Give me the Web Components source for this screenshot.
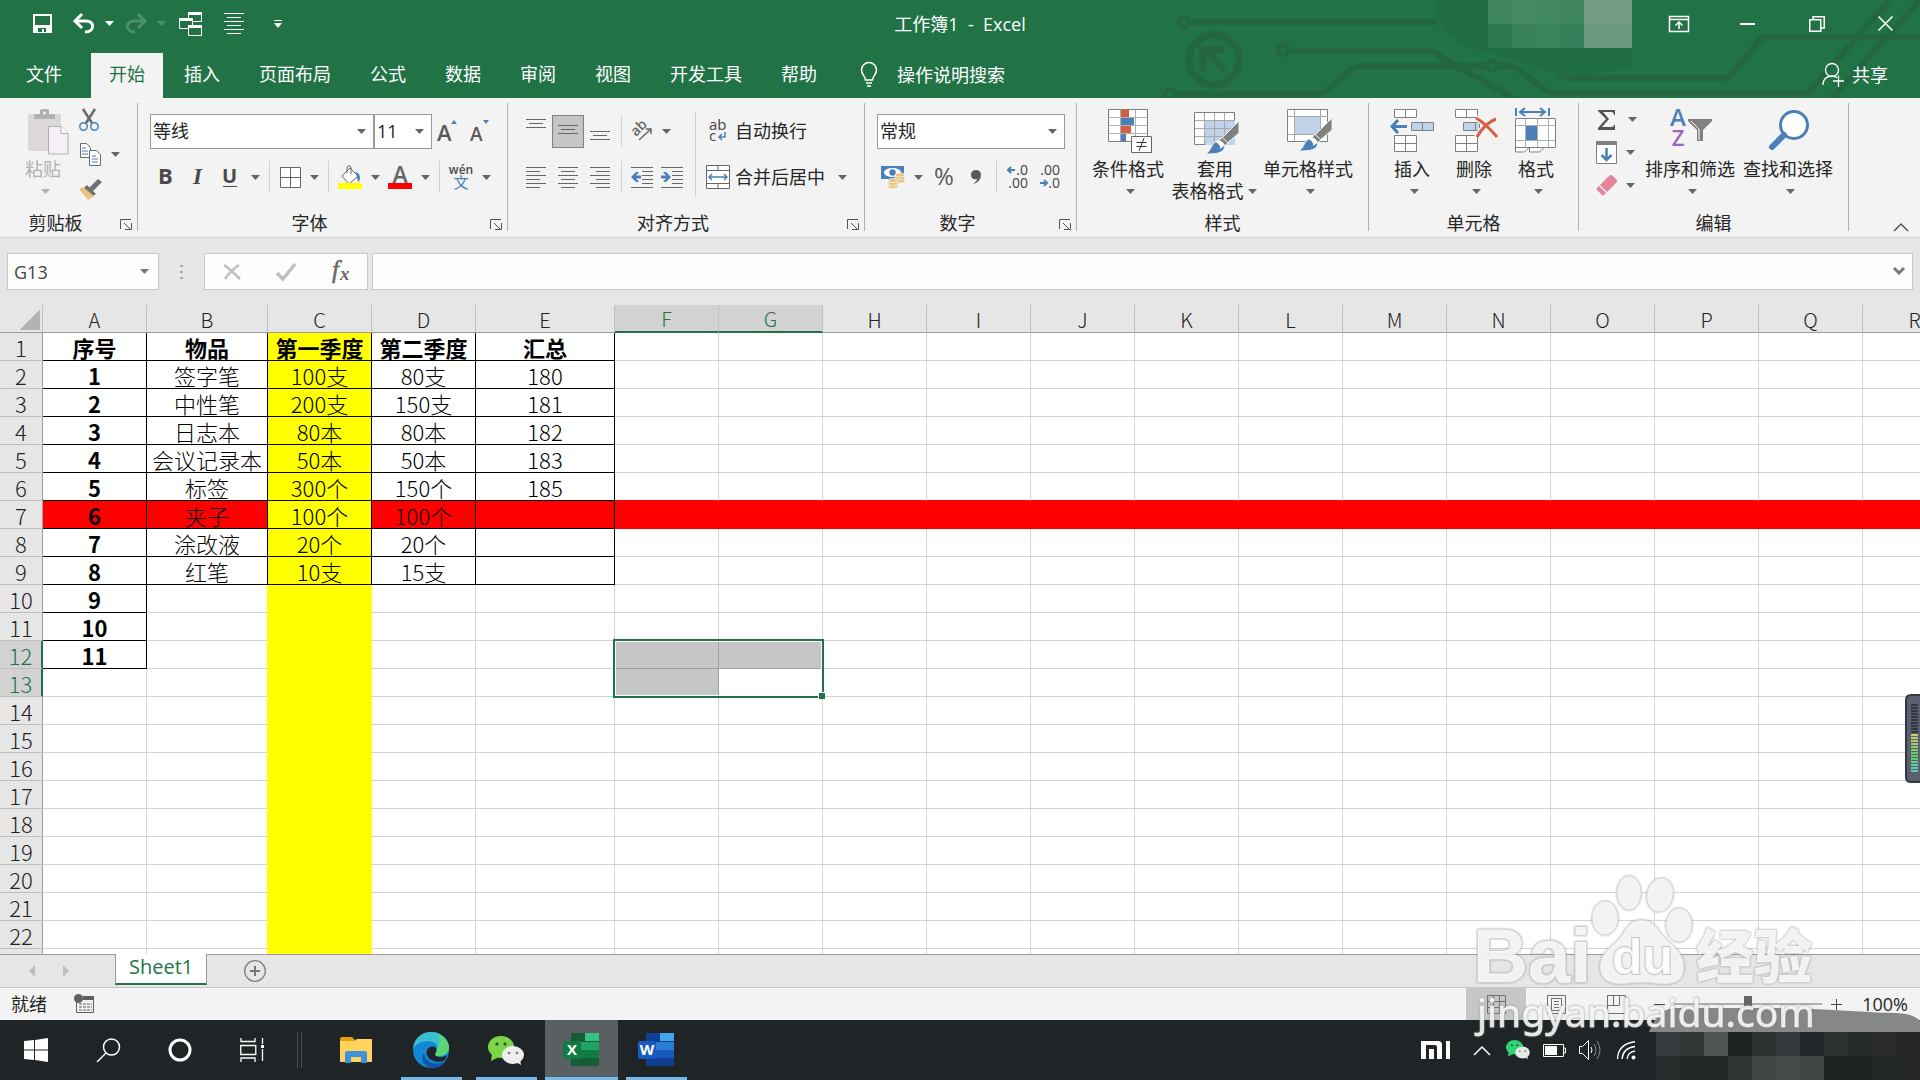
<!DOCTYPE html>
<html lang="zh-CN">
<head>
<meta charset="utf-8">
<meta name="viewport" content="width=device-width, initial-scale=1">
<title>工作簿1 - Excel</title>
<style>
    :root {
        --green: #217346;
        --ribbon: #f3f3f3;
        --panel: #e6e6e6;
        --line: #c6c6c6;
        --ink: #262626;
    }
    body {
        margin: 0;
        height: 100vh;
        display: flex;
        flex-direction: column;
        overflow: hidden;
        position: relative;
        background: var(--panel);
        color: var(--ink);
        font: 18px/22px "Open Sans", "Noto Sans CJK SC", sans-serif;
    }
</style>
</head>
<body>
<xl-header></xl-header>
<xl-ribbon></xl-ribbon>
<xl-formula-bar></xl-formula-bar>
<xl-sheet></xl-sheet>
<xl-sheet-tabs></xl-sheet-tabs>
<xl-status-bar></xl-status-bar>
<win-taskbar></win-taskbar>
<level-meter></level-meter>
<site-watermark></site-watermark>

<script>
const RESET = `
    :host, *, *::before, *::after { box-sizing: border-box; }
    button, input, select {
        font: inherit; color: inherit; background: none; border: 0;
        margin: 0; padding: 0; border-radius: 0; outline: 0;
    }
    a { color: inherit; text-decoration: none; }
`;

function define(name, html, after) {
    customElements.define(name, class extends HTMLElement {
        connectedCallback() {
            if (this.shadowRoot) return;
            this.attachShadow({ mode: 'open' });
            this.shadowRoot.innerHTML = typeof html === 'function' ? html(this) : html;
            if (after) after(this);
        }
    });
}

const rows = (list, c = '#666') => list.map(([x, y, w]) => `<rect x="${x}" y="${y}" width="${w}" height="1" fill="${c}"/>`).join('');
const arrowL = (x, y) => `<path d="M${x} ${y}l5-5h3l-3 3.500h5v3h-5l3 3.500h-3z" fill="#4a80b8"/>`;
const arrowR = (x, y) => `<path d="M${x} ${y}l-5-5h-3l3 3.500h-5v3h5l-3 3.500h3z" fill="#4a80b8"/>`;
const brush = (x, y) => `<g transform="translate(${x} ${y})">
    <path d="M34 -1v12L21 22l-5-5z" fill="#808080" stroke="#f3f3f3"/>
    <path d="M17 15l6 6-5 4-5-5z" fill="#808080" stroke="#f3f3f3"/>
    <path d="M0 32c6-1 6-12 13-13 7 0 9 8 3 11-4 2-10 2-16 2z" fill="#4a80b8" stroke="#f3f3f3"/>
    <path d="M10 20c4-3 9 0 9 4l-4 3c1-3-2-6-5-7z" fill="#fff"/></g>`;
const wechat = (a, b) => `<ellipse cx="13" cy="11" rx="13" ry="11" fill="${a}"/><path d="M4 18l-1 7 8-4z" fill="${a}"/>
    <circle cx="9" cy="8" r="1.600" fill="#1d5a1c"/><circle cx="17" cy="8" r="1.600" fill="#1d5a1c"/>
    <ellipse cx="25" cy="19" rx="11" ry="9" fill="${b}"/><path d="M28 26l5 3-1-6z" fill="${b}"/>
    <circle cx="21" cy="17" r="1.300" fill="#777"/><circle cx="29" cy="17" r="1.300" fill="#777"/>`;
const office = (letter, c) => `<path d="M8 0h28v33h-28z" fill="${c[0]}"/><path d="M22 0h14v8h-14z" fill="${c[1]}"/>
    <path d="M8 9h14v8h-14z" fill="${c[2]}"/><path d="M22 9h14v8h-14z" fill="${c[3]}"/><path d="M8 17h28v8h-28z" fill="${c[4]}"/><path d="M8 25h28v8h-28z" fill="${c[5]}"/>
    <rect y="8" width="18" height="18" rx="2" fill="${c[6]}"/>
    <text x="9" y="22" text-anchor="middle" font-size="15" font-weight="700" fill="#fff">${letter}</text>`;

// name: [width, height, markup]
const ICONS = {
    caret: [9, 5, '<path d="M0 0h9L4.500 5z" fill="currentColor"/>'],
    save: [19, 19, '<path d="M1 1h17v17H1z" fill="none" stroke="#fff" stroke-width="2"/><path d="M2 11h15v7H2z" fill="#fff"/><path d="M5 14h8v4h-2v-3H9v3H5z" fill="#217346"/>'],
    undo: [20, 20, '<path d="M2 7h11c9 0 9 11-1 11" fill="none" stroke="#fff" stroke-width="3"/><path d="M9 0L2 7l7 7" fill="none" stroke="#fff" stroke-width="3"/>'],
    redo: [20, 20, '<g fill="none" stroke="#4f9069" stroke-width="3"><path d="M20 7H9C0 7 0 18 10 18"/><path d="M13 0l7 7-7 7"/></g>'],
    windows: [23, 24, '<g fill="#217346" stroke="#fff"><path d="M9.500 1.500h13v8h-13z"/><path d="M.5 7.500h13v9H.5z"/><path d="M9.500 13.500h13v10h-13z"/></g><path d="M9 0h14v3H9zM0 6h14v3H0zM9 13h14v3H9z" fill="#fff"/>'],
    lines: [20, 21, rows([[0, 0, 20], [3, 4, 14], [0, 8, 20], [3, 12, 14], [0, 16, 20], [3, 20, 14]], '#fff')],
    customize: [8, 8, '<path d="M0 0h8v1H0zM0 3h8L4 8z" fill="#fff"/>'],
    ribbonopt: [20, 16, '<path d="M.5.5h19v15H.5zM0 3.500h20M10 13V6M6.500 9.500L10 6l3.500 3.500" fill="none" stroke="#fff" stroke-width="1.500"/>'],
    min: [15, 2, '<path d="M0 0h15v2H0z" fill="#fff"/>'],
    restore: [16, 16, '<path d="M.75 3.750h11v11.500h-11zM4 3.500V.75h11.250V12H12" fill="none" stroke="#fff" stroke-width="1.500"/>'],
    close: [15, 15, '<path d="M.5.5l14 14M14.500.5l-14 14" stroke="#fff" stroke-width="1.600"/>'],
    bulb: [18, 26, '<path d="M5.500 18c0-4-4-5-4-10a7.500 7.500 0 0115 0c0 5-4 6-4 10zM6 21h6M7 24h4" fill="none" stroke="#fff" stroke-width="1.500"/>'],
    share: [22, 24, '<circle cx="10" cy="7" r="6.500" fill="none" stroke="#fff" stroke-width="1.300"/><path d="M1 22c0-7 5-9 9-9 2 0 4 .5 5 2M11 18h11M16.500 12.500V24" fill="none" stroke="#fff" stroke-width="1.300"/>'],
    paste: [48, 48, '<rect x="7" y="6" width="33" height="37" rx="2" fill="#dbd7da"/><path d="M13 11V6h6V3q0-2 2-2h5q2 0 2 2v3h6v5z" fill="#b1b1b1"/><circle cx="23.500" cy="5" r="1.500" fill="#f3f3f3"/><path d="M27.500 18.500H40l7 7v20.500H27.500z" fill="#f5f0f7" stroke="#b1b1b1"/><path d="M40 18.500v7h7" fill="#fff" stroke="#b1b1b1"/>'],
    cut: [20, 22, '<path d="M4 0l9 14M16 0L7 14" stroke="#6a6a6a" stroke-width="2.500"/><circle cx="4.500" cy="17.500" r="3.700" fill="none" stroke="#4a80b8" stroke-width="1.500"/><circle cx="15.500" cy="17.500" r="3.700" fill="none" stroke="#4a80b8" stroke-width="1.500"/>'],
    copy: [21, 23, '<g fill="#fff" stroke="#6a6a6a"><path d="M.5.5h6l4 4v10H.5z"/><path d="M9.500 7.500h7l4 4v11h-11z"/></g><path d="M2 5h4M2 8h6M2 11h6M12 13h4M12 16h6M12 19h6" stroke="#4a80b8"/>'],
    painter: [23, 21, '<path d="M10 9l9-9 4 3-9 9z" fill="#707070"/><path d="M8 6l9 9-3 2-9-8z" fill="#707070"/><path d="M4 8l11 9-6 4L0 10z" fill="#ecc27f"/>'],
    launcher: [12, 11, '<path d="M.5 10V.5H11M4 4l6 6M11.500 4v6.500H5" fill="none" stroke="#555"/>'],
    grow: [22, 22, '<text x="0" y="21" font-size="22" font-weight="600" fill="#595959">A</text><path d="M14 4l3-4 3 4z" fill="#4a80b8"/>'],
    shrink: [20, 22, '<text x="0" y="21" font-size="19" font-weight="600" fill="#595959">A</text><path d="M13 0h6l-3 4z" fill="#4a80b8"/>'],
    bold: [16, 22, '<text x="0" y="18" font-size="22" font-weight="700" fill="#4a4a4a">B</text>'],
    italic: [16, 22, '<text x="3" y="18" font-size="23" font-style="italic" font-weight="700" font-family="Liberation Serif, serif" fill="#4a4a4a">I</text>'],
    underline: [16, 22, '<text x="0" y="17" font-size="20" font-weight="700" fill="#4a4a4a">U</text><path d="M1 20h14v1H1z" fill="#4a4a4a"/>'],
    borders: [21, 21, '<path d="M.5.5h20v20H.5zM.5 10.500h20M10.500.5v20" fill="#fff" stroke="#666"/>'],
    fill: [24, 25, '<path d="M4 11l8-8 8 8-9 8z" fill="#fff" stroke="#666"/><path d="M9 8V3q2-5 4 0v6" fill="none" stroke="#666"/><path d="M17 7c5 1 6 5 4 10-3-3-1-6-4-10z" fill="#4a80b8"/><path d="M0 18h24v6H0z" fill="#ff0"/>'],
    fontcolor: [24, 25, '<text x="12" y="18" text-anchor="middle" font-size="23" font-weight="600" fill="#666">A</text><path d="M0 18h24v6H0z" fill="red"/>'],
    phonetic: [24, 26, '<text x="12" y="10" text-anchor="middle" font-size="12" font-weight="600" fill="#4a4a4a">wén</text><text x="12" y="24" text-anchor="middle" font-size="15" fill="#4a80b8">文</text>'],
    top: [20, 28, rows([[0, 2, 20], [3, 6, 14], [0, 10, 20]])],
    middle: [20, 28, rows([[0, 8, 20], [3, 12, 14], [0, 16, 20]])],
    bottom: [20, 28, rows([[0, 14, 20], [3, 18, 14], [0, 22, 20]])],
    left: [20, 21, rows([[0, 0, 20], [0, 4, 14], [0, 8, 20], [0, 12, 14], [0, 16, 20], [0, 20, 14]])],
    center: [20, 21, rows([[0, 0, 20], [3, 4, 14], [0, 8, 20], [3, 12, 14], [0, 16, 20], [3, 20, 14]])],
    right: [20, 21, rows([[0, 0, 20], [6, 4, 14], [0, 8, 20], [6, 12, 14], [0, 16, 20], [6, 20, 14]])],
    outdent: [22, 21, rows([[0, 0, 22], [11, 4, 11], [11, 8, 11], [11, 12, 11], [11, 16, 11], [0, 20, 22]]) + arrowL(0, 10)],
    indent: [22, 21, rows([[0, 0, 22], [11, 4, 11], [11, 8, 11], [11, 12, 11], [11, 16, 11], [0, 20, 22]]) + arrowR(10, 10)],
    rotate: [22, 22, '<text transform="translate(5 17) rotate(-45)" font-size="14" font-weight="600" fill="#666">ab</text><path d="M8 20L20 9M15 9h5v5" fill="none" stroke="#666" stroke-width="1.500"/>'],
    wrap: [24, 24, '<text x="3" y="11" font-size="15" fill="#444">ab</text><text x="3" y="22" font-size="15" fill="#444">c</text><path d="M19 13v5h-6M16 15l-3 3 3 3" fill="none" stroke="#4a80b8" stroke-width="1.500"/>'],
    merge: [24, 24, '<path d="M.5.5h23v23H.5zM.5 5.500h23M.5 18.500h23M12 .5v5M12 18.500v5" fill="#fff" stroke="#666"/><path d="M3 12h18M6 9l-3 3 3 3M18 9l3 3-3 3" fill="none" stroke="#4a80b8" stroke-width="1.500"/>'],
    money: [24, 24, '<path d="M0 1h23v13H0z" fill="#4a80b8"/><ellipse cx="11.500" cy="7.500" rx="8.500" ry="4.500" fill="#fff"/><circle cx="11.500" cy="7.500" r="3.200" fill="#4a80b8"/><g fill="#ecc27f" stroke="#f3f3f3" stroke-width=".8"><ellipse cx="19" cy="16" rx="5" ry="2"/><ellipse cx="19" cy="13" rx="5" ry="2"/><ellipse cx="19" cy="10" rx="5" ry="2"/><ellipse cx="12" cy="21.500" rx="5" ry="2"/><ellipse cx="12" cy="18.500" rx="5" ry="2"/><ellipse cx="12" cy="15.500" rx="5" ry="2"/></g>'],
    percent: [22, 24, '<text x="11" y="20" text-anchor="middle" font-size="24" fill="#595959">%</text>'],
    comma: [12, 16, '<path d="M6 1c4 0 5 3 5 5 0 4-3 8-8 9 3-2 4-4 4-5-4 1-6-1-6-4 0-3 2-5 5-5z" fill="#5a5a5a"/>'],
    incdec: [20, 26, '<text x="20" y="11" text-anchor="end" font-size="14" fill="#444">.0</text><text x="20" y="24" text-anchor="end" font-size="14" fill="#444">.00</text><path d="M7 6H0M3 3L0 6l3 3" fill="none" stroke="#4a80b8" stroke-width="2"/>'],
    decdec: [20, 26, '<text x="20" y="11" text-anchor="end" font-size="14" fill="#444">.00</text><text x="20" y="24" text-anchor="end" font-size="14" fill="#444">.0</text><path d="M0 19h7M4 16l3 3-3 3" fill="none" stroke="#4a80b8" stroke-width="2"/>'],
    cond: [44, 46, '<path d="M.5 1.500h39v32H.5z" fill="#fff" stroke="#808080"/><path d="M1 9.500h38M1 17.500h38M1 25.500h38M12.500 2v31M27.500 2v31" stroke="#b0b0b0"/><path d="M13 2h8v7h-8zM13 18h10v7H13z" fill="#d75f40"/><path d="M13 10h13v7H13zM13 26h5v7h-5z" fill="#4a80b8"/><path d="M23.500 28.500h20v16h-20z" fill="#fff" stroke="#666"/><path d="M28.500 34.500h10M28.500 38.500h10M36 30l-5 13" stroke="#333"/>'],
    tablefmt: [46, 48, '<path d="M.5 4.500h40v32H.5z" fill="#fff" stroke="#808080"/><path d="M11 13h30v24H11z" fill="#c0d3e9"/><path d="M1 12.500h40M1 20.500h40M1 28.500h40M10.500 5v31M20.500 5v31M30.500 5v31" stroke="#a8a8a8"/>' + brush(11, 14)],
    cellstyle: [46, 48, '<path d="M.5 1.500h40v32H.5z" fill="#fff" stroke="#808080"/><path d="M1 8.500h40M1 26.500h40M7.500 2v31M33.500 2v31" stroke="#a8a8a8"/><path d="M8 9h25v17H8z" fill="#c0d3e9"/>' + brush(11, 11)],
    insert: [48, 46, '<g fill="#fff" stroke="#808080"><path d="M4.500 1.500h22v8h-22zM15.500 1.500v8M4.500 27.500h22v16h-22zM4.500 35.500h22M15.500 27.500v16"/><path d="M21.500 14.500h22v8h-22zM32.500 14.500v8" fill="#c0d3e9"/></g><path d="M1 18.500h16M8 12l-6 6.500 6 6.500" fill="none" stroke="#4a80b8" stroke-width="3"/>'],
    delete: [44, 46, '<g fill="#fff" stroke="#808080"><path d="M1.500 1.500h22v8h-22zM12.500 1.500v8M1.500 27.500h22v16h-22zM1.500 35.500h22M12.500 27.500v16"/><path d="M9.500 14.500h16v8h-16zM21.500 14.500v8" fill="#c0d3e9"/></g><path d="M22 10c9 5 14 11 21 19M42 11c-8 3-14 9-19 18" fill="none" stroke="#f3f3f3" stroke-width="6"/><path d="M22 10c9 5 14 11 21 19M42 11c-8 3-14 9-19 18" fill="none" stroke="#d75f40" stroke-width="3"/>'],
    format: [46, 46, '<path d="M1 0v8M34 0v8M5 4h25M10 0L5 4l5 4M25 0l5 4-5 4" fill="none" stroke="#4a80b8" stroke-width="2"/><path d="M.5 39v5h9l5-5M14.500 39v5h10l5-5" fill="#fff" stroke="#808080"/><path d="M.5 10.500h40v29H.5z" fill="#fff" stroke="#808080"/><path d="M1 17.500h39M1 32.500h39M10.500 11v28M22.500 11v28M33.500 11v28" stroke="#b0b0b0"/><path d="M11 18h11v14H11z" fill="#4a80b8"/>'],
    sigma: [20, 20, '<path d="M1 0h17v5h-1c0-2-1-3-3-3H6l6 7-7 8h9c2 0 3-1 4-3v6H1v-2l8-9-8-8z" fill="#555"/>'],
    filldown: [21, 23, '<path d="M.5.5h20v22H.5z" fill="#fff" stroke="#808080"/><path d="M0 0h21v4H0z" fill="#808080"/><path d="M10.500 7v12M5.500 14l5 5 5-5" fill="none" stroke="#4a80b8" stroke-width="2.500"/>'],
    eraser: [21, 21, '<path d="M13 1q2-2 4 0l3 3q2 2 0 4l-9 9-7-7z" fill="#e58496"/><path d="M3 11l7 7-2 2q-1 1-2 0l-5-5q-1-1 0-2z" fill="#e58496"/>'],
    sort: [46, 46, '<text x="9" y="18" text-anchor="middle" font-size="24" font-weight="600" fill="#4a80b8">A</text><text x="9" y="38" text-anchor="middle" font-size="22" font-weight="600" fill="#9a68b8">Z</text><path d="M19 11h24v2l-9 9v11h-6V22l-9-9z" fill="#808080"/><path d="M22 13l8 8v11" fill="none" stroke="#fff"/>'],
    find: [45, 44, '<circle cx="26" cy="17" r="13.500" fill="#fff" stroke="#4a80b8" stroke-width="3"/><path d="M16 27L4 39" stroke="#4a80b8" stroke-width="6" stroke-linecap="round"/>'],
    collapse: [16, 9, '<path d="M1 8l7-7 7 7" fill="none" stroke="#555" stroke-width="1.500"/>'],
    cancel: [18, 16, '<path d="M1 1c6 4 10 8 16 14M16 1C10 5 6 9 2 15" fill="none" stroke="#bfbfbf" stroke-width="2.500"/>'],
    enter: [20, 18, '<path d="M1 10l6 6L19 1" fill="none" stroke="#bfbfbf" stroke-width="3.500"/>'],
    fx: [20, 26, '<text x="2" y="19" font-size="25" font-style="italic" font-family="Liberation Serif, serif" stroke="#6a6a6a" stroke-width=".6" fill="#6a6a6a">f</text><text x="10" y="21" font-size="19" font-style="italic" font-weight="700" font-family="Liberation Serif, serif" fill="#6a6a6a">x</text>'],
    expand: [12, 9, '<path d="M1 1l5 5 5-5" fill="none" stroke="#777" stroke-width="3"/>'],
    prev: [6, 12, '<path d="M6 0v12L0 6z" fill="#bdbdbd"/>'],
    next: [6, 12, '<path d="M0 0v12l6-6z" fill="#bdbdbd"/>'],
    plus: [22, 22, '<circle cx="11" cy="11" r="10.300" fill="none" stroke="#808080" stroke-width="1.300"/><path d="M11 6v10M6 11h10" stroke="#777" stroke-width="2"/>'],
    macro: [21, 20, '<path d="M2.500 8v10.500h17V4" fill="none" stroke="#606060"/><path d="M9 2h11v4H9z" fill="#606060"/><circle cx="4.500" cy="4.500" r="4.500" fill="#606060"/><path d="M5 10h13M5 13h13M5 16h13" stroke="#606060" stroke-dasharray="3 1"/>'],
    normal: [19, 19, '<path d="M.5.5h18v18H.5zM.5 6.500h18M.5 12.500h18M6.500.5v18M12.500.5v18" fill="none" stroke="#707070"/>'],
    layout: [19, 19, '<path d="M.5.5h18v18H.5zM4.500 3.500h10v12h-10zM7 6.500h5M7 9.500h5M7 12.500h5" fill="none" stroke="#707070"/>'],
    pagebreak: [19, 19, '<path d="M.5.5h18v18H.5zM.5 10.500h12V.5M6.500.5v10" fill="none" stroke="#707070"/>'],
    zoomout: [11, 11, '<path d="M0 5.500h11" stroke="#444"/>'],
    zoomin: [11, 11, '<path d="M0 5.500h11M5.500 0v11" stroke="#444"/>'],
    start: [24, 24, '<path d="M0 3l10-1v9.500H0zM11 2l13-2v11.500H11zM0 12.500h10V22L0 21zM11 12.500h13V24l-13-2z" fill="#fff"/>'],
    search: [25, 25, '<circle cx="15.500" cy="9" r="8" fill="none" stroke="#fff" stroke-width="1.500"/><path d="M10 15L1 24" stroke="#fff" stroke-width="1.500"/>'],
    cortana: [24, 24, '<circle cx="12" cy="12" r="10" fill="none" stroke="#fff" stroke-width="3"/>'],
    taskview: [24, 24, '<path d="M1 0v3.500h14V0M1 24v-4h14v4M.75 7.500h15v9h-15zM22.500 0v6M22.500 11v12" fill="none" stroke="#fff" stroke-width="1.300"/><path d="M21 7h3v3h-3z" fill="#fff"/>'],
    folder: [32, 27, '<path d="M0 2q0-2 2-2h10l3 3v6H0z" fill="#e0a010"/><path d="M0 4h14l3-2h15v23H0z" fill="#ffd35c"/><path d="M5 26V16q0-2 2-2h18q2 0 2 2v10h-6v-6H11v6z" fill="#3c93d9"/>'],
    edge: [36, 36, '<circle cx="18" cy="18" r="18" fill="#1387d3"/><path d="M0 17C1 6 9 0 18 0c11 0 18 8 18 15 0 6-5 9-10 9-4 0-5-2-3-4 4-6-1-11-8-11C7 9 2 13 0 17z" fill="#35c1d0"/><path d="M25 2c7 3 11 9 11 14 0 5-5 8-10 8-4 0-5-2-3-4 3-5 5-11 2-18z" fill="#5bd674"/><path d="M11 21c1 9 11 14 22 8-4 6-10 8-17 7-6-3-9-11-5-15z" fill="#1455a5"/><path d="M14 23c-2-6 3-10 8-8 2 2 2 5 0 7 0 4 8 4 12 1-1 3-2 5-3 6-7 2-15 0-17-6z" fill="#1f2527"/>'],
    wechat: [36, 29, wechat('#7dd649', '#eee')],
    excel: [36, 34, office('X', ['#185c37', '#33c481', '#21a366', '#21a366', '#107c41', '#185c37', '#107c41'])],
    word: [36, 34, office('W', ['#103f91', '#41a5ee', '#2b7cd3', '#2b7cd3', '#185abd', '#103f91', '#185abd'])],
    mi: [29, 18, '<path d="M0 0h17q4 0 4 4v14h-5V6q0-2-2-2H5v14H0zM8 8h5v10H8zM25 0h4v18h-4z" fill="#fff"/>'],
    up: [18, 11, '<path d="M1 10l8-8 8 8" fill="none" stroke="#fff" stroke-width="1.500"/>'],
    traychat: [24, 20, `<g transform="scale(.66)">${wechat('#2ed573', '#e8e8e8')}</g>`],
    battery: [23, 13, '<path d="M.5.5h20v12H.5zM21 4h1.500v5H21" fill="none" stroke="#fff"/><path d="M2 2h12v9H2z" fill="#fff"/>'],
    sound: [22, 20, '<path d="M.5 6.500h3l6-6v19l-6-6h-3z" fill="none" stroke="#fff"/><path d="M12 7q2 3 0 6" fill="none" stroke="#fff"/><path d="M15 4q4 6 0 12M18 1q6 9 0 18" fill="none" stroke="#888"/>'],
    wifi: [19, 19, '<path d="M.5 18Q1 3 18 .75M5 18Q6 7 18 5.500M10 18q1-7 8-8" fill="none" stroke="#fff" stroke-width="1.300"/><circle cx="16.500" cy="16.500" r="2" fill="#fff"/>']
};

define('xl-icon', el => {
    const [w, h, body] = ICONS[el.getAttribute('name')];
    return `
        <style>:host { display: inline-flex; flex: none; } svg { display: block; overflow: visible; }</style>
        <svg width="${w}" height="${h}" viewBox="0 0 ${w} ${h}" aria-hidden="true">${body}</svg>`;
});

define('xl-tool', el => `
    <style>${RESET}
        :host { display: inline-flex; height: 33px; }
        :host([active]) .main { background: #c6c6c6; border: 1px solid #808080; }
        button { display: flex; align-items: center; justify-content: center; gap: 5px; height: 100%; white-space: nowrap; }
        .main { width: ${el.getAttribute('w') || 32}px; }
        :host([text]) .main { width: auto; padding: 0 5px; }
        .drop { width: 18px; color: #666; }
        :host([text]) .drop { margin-left: 3px; }
    </style>
    <button class="main" aria-label="${el.getAttribute('label') || el.textContent}"><xl-icon name="${el.getAttribute('icon')}"></xl-icon><slot></slot></button>
    ${el.hasAttribute('caret') ? '<button class="drop" aria-label="更多"><xl-icon name="caret"></xl-icon></button>' : ''}`);

define('xl-big-button', el => `
    <style>${RESET}
        :host { display: block; width: ${el.getAttribute('w')}px; }
        :host([disabled]) { color: #b1b1b1; }
        button { width: 100%; display: flex; flex-direction: column; align-items: center; padding-top: 5px; white-space: nowrap; }
        .pic { height: 50px; padding-left: 4px; }
        .more { height: 22px; display: flex; align-items: center; gap: 4px; padding-left: 5px; }
        :host([split]) .more { padding: 0 2px 0 0; }
        .more .caret { color: #666; }
        :host([disabled]) .caret { color: #b1b1b1; }
    </style>
    <button>
        <span class="pic"><xl-icon name="${el.getAttribute('icon')}"></xl-icon></span>
        <slot></slot>
        <span class="more"><slot name="second"></slot><xl-icon class="caret" name="caret"></xl-icon></span>
    </button>`);

define('xl-combo', el => `
    <style>${RESET}
        :host { display: grid; width: ${el.getAttribute('w')}px; height: 35px; background: #fff; border: 1px solid #999; align-items: center; }
        select, xl-icon { grid-area: 1 / 1; }
        select { appearance: none; width: 100%; height: 100%; padding-left: 2px; }
        xl-icon { justify-self: end; margin-right: 7px; color: #666; pointer-events: none; }
    </style>
    <select aria-label="${el.getAttribute('label')}"><option>${el.getAttribute('value')}</option></select>
    <xl-icon name="caret"></xl-icon>`);

define('xl-group', el => `
    <style>${RESET}
        :host { display: flex; flex-direction: column; flex: none; width: ${el.getAttribute('w')}px; margin: 5px 0 6px; border-right: 1px solid #b1b1b1; }
        .content { height: 112px; display: flex; padding-left: ${el.getAttribute('pad') || 12}px; }
        .label { display: flex; line-height: 16px; }
        .label span { flex: 1; text-align: center; }
        button { width: 26px; padding: 2px 0 0 4px; display: flex; align-items: center; justify-content: center; }
    </style>
    <div class="content"><slot></slot></div>
    <div class="label"><span>${el.getAttribute('label')}</span>
        ${el.hasAttribute('launcher') ? `<button aria-label="${el.getAttribute('label')}设置"><xl-icon name="launcher"></xl-icon></button>` : ''}
    </div>`);

define('xl-header', `
    <style>${RESET}
        :host { display: block; flex: none; position: relative; background: var(--green); color: #fff; }
        .art { position: absolute; right: 0; top: 0; }
        .title { position: relative; height: 53px; display: grid; grid-template-columns: 1fr auto 1fr; align-items: center; padding-bottom: 6px; }
        .title h1 { margin: 0; font: inherit; white-space: pre; }
        .quick, .win, nav { display: flex; }
        .quick { padding-left: 20px; }
        .win { justify-content: flex-end; }
        .quick button, .win button { height: 36px; display: flex; align-items: center; justify-content: center; }
        .quick button { width: 44px; }
        .quick .u { width: 38px; }
        .quick .d { width: 14px; }
        .win button { width: 69px; }
        nav { position: relative; height: 45px; align-items: stretch; gap: 3px; padding: 0 32px 0 8px; }
        nav a { padding: 0 18px; line-height: 42px; white-space: nowrap; }
        nav a:first-child { margin-right: 8px; }
        nav .on { background: var(--ribbon); color: var(--green); }
        nav button { display: flex; align-items: center; white-space: nowrap; height: 43px; }
        .tell { gap: 19px; margin-left: 22px; }
        .share { gap: 8px; margin-left: auto; }
        .dim { color: #4f9069; }
    </style>
    <svg class="art" width="760" height="98" viewBox="1160 0 760 98" aria-hidden="true">
        <g fill="none" stroke="#236640" stroke-width="6">
            <circle cx="1184" cy="22" r="5" stroke-width="4"/><path d="M1190 22h248"/>
            <circle cx="1214" cy="60" r="25" stroke-width="7"/>
            <circle cx="1283" cy="50" r="5" stroke-width="4"/><path d="M1289 51h140q6 0 12 6l74 42"/>
            <circle cx="1170" cy="94" r="5" stroke-width="4"/><path d="M1176 94h142q6 0 10-5l24-20q4-3 8-3h126"/>
            <circle cx="1492" cy="66" r="5" stroke-width="4"/><path d="M1498 66h10q6 0 10 4l28 20q4 3 8 3h254L1890 0M1832 98L1920 0"/>
            <path d="M1560 74q4 4 10 4h154q6 0 8-4l28-34q2-3 8-3h154"/>
        </g>
        <path d="M1199 46h25v7h-11l14 16-5 4-15-18v16h-8z" fill="#236640"/>
        <path d="M1437 0h51v48h144v20l-62 9-100-30q-33-10-33-47z" fill="#216d43"/>
        <g><path d="M1488 0h24v24h-24z" fill="#3f8660"/><path d="M1512 0h24v24h-24z" fill="#458a64"/><path d="M1536 0h24v24h-24z" fill="#428862"/><path d="M1560 0h24v24h-24z" fill="#3e8560"/><path d="M1584 0h48v24h-48z" fill="#749c85"/>
        <path d="M1488 24h24v24h-24z" fill="#2e7a50"/><path d="M1512 24h24v24h-24z" fill="#37805a"/><path d="M1536 24h24v24h-24z" fill="#3b835b"/><path d="M1560 24h24v24h-24z" fill="#34805a"/><path d="M1584 24h48v24h-48z" fill="#6a977e"/></g>
    </svg>
    <div class="title">
        <div class="quick">
            <button aria-label="保存"><xl-icon name="save"></xl-icon></button>
            <button class="u" aria-label="撤消"><xl-icon name="undo"></xl-icon></button>
            <button class="d" aria-label="撤消列表"><xl-icon name="caret"></xl-icon></button>
            <button class="u" aria-label="恢复"><xl-icon name="redo"></xl-icon></button>
            <button class="d dim" aria-label="恢复列表"><xl-icon name="caret"></xl-icon></button>
            <button aria-label="切换窗口"><xl-icon name="windows"></xl-icon></button>
            <button aria-label="居中"><xl-icon name="lines"></xl-icon></button>
            <button aria-label="自定义快速访问工具栏"><xl-icon name="customize"></xl-icon></button>
        </div>
        <h1>工作簿1  -  Excel</h1>
        <div class="win">
            <button aria-label="功能区显示选项"><xl-icon name="ribbonopt"></xl-icon></button>
            <button aria-label="最小化"><xl-icon name="min"></xl-icon></button>
            <button aria-label="还原"><xl-icon name="restore"></xl-icon></button>
            <button aria-label="关闭"><xl-icon name="close"></xl-icon></button>
        </div>
    </div>
    <nav>
        <a href="#">文件</a><a href="#" class="on">开始</a><a href="#">插入</a><a href="#">页面布局</a><a href="#">公式</a>
        <a href="#">数据</a><a href="#">审阅</a><a href="#">视图</a><a href="#">开发工具</a><a href="#">帮助</a>
        <button class="tell"><xl-icon name="bulb"></xl-icon>操作说明搜索</button>
        <button class="share"><xl-icon name="share"></xl-icon>共享</button>
    </nav>`);

define('xl-ribbon', `
    <style>${RESET}
        :host { display: flex; flex: none; background: var(--ribbon); border-bottom: 1px solid #d2d2d2; }
        .stack { display: flex; flex-direction: column; }
        .two { padding-top: 11px; gap: 12px; }
        .row { display: flex; height: 34px; align-items: center; }
        .sep { width: 1px; height: 32px; margin: 0 5px; background: #d0d0d0; }
        .tall { width: 1px; height: 85px; margin: 9px 5px 0 8px; background: #d0d0d0; }
        .clip { padding-top: 0; gap: 2px; }
        .collapse { margin: auto 11px 5px auto; display: flex; }
    </style>
    <xl-group w="138" label="剪贴板" launcher>
        <xl-big-button icon="paste" w="62" disabled>粘贴</xl-big-button>
        <div class="stack clip">
            <xl-tool icon="cut" w="30" label="剪切"></xl-tool>
            <xl-tool icon="copy" w="32" label="复制" caret></xl-tool>
            <xl-tool icon="painter" w="32" label="格式刷"></xl-tool>
        </div>
    </xl-group>
    <xl-group w="370" label="字体" launcher>
        <div class="stack two">
            <div class="row">
                <xl-combo w="224" label="字体" value="等线"></xl-combo><xl-combo w="58" label="字号" value="11"></xl-combo>
                <xl-tool icon="grow" label="增大字号"></xl-tool><xl-tool icon="shrink" label="减小字号"></xl-tool>
            </div>
            <div class="row">
                <xl-tool icon="bold" label="加粗"></xl-tool><xl-tool icon="italic" label="倾斜"></xl-tool><xl-tool icon="underline" label="下划线" caret></xl-tool>
                <span class="sep"></span>
                <xl-tool icon="borders" w="30" label="边框" caret></xl-tool>
                <span class="sep"></span>
                <xl-tool icon="fill" label="填充颜色" caret></xl-tool><xl-tool icon="fontcolor" label="字体颜色" caret></xl-tool>
                <span class="sep"></span>
                <xl-tool icon="phonetic" label="拼音" caret></xl-tool>
            </div>
        </div>
    </xl-group>
    <xl-group w="357" label="对齐方式" launcher>
        <div class="stack two">
            <div class="row">
                <xl-tool icon="top" label="顶端对齐"></xl-tool><xl-tool icon="middle" label="垂直居中" active></xl-tool><xl-tool icon="bottom" label="底端对齐"></xl-tool>
                <span class="sep"></span>
                <xl-tool icon="rotate" w="30" label="方向" caret></xl-tool>
            </div>
            <div class="row">
                <xl-tool icon="left" label="左对齐"></xl-tool><xl-tool icon="center" label="居中"></xl-tool><xl-tool icon="right" label="右对齐"></xl-tool>
                <span class="sep"></span>
                <xl-tool icon="outdent" w="30" label="减少缩进量"></xl-tool><xl-tool icon="indent" w="30" label="增加缩进量"></xl-tool>
            </div>
        </div>
        <span class="tall"></span>
        <div class="stack two">
            <div class="row"><xl-tool icon="wrap" text>自动换行</xl-tool></div>
            <div class="row"><xl-tool icon="merge" text caret>合并后居中</xl-tool></div>
        </div>
    </xl-group>
    <xl-group w="212" label="数字" launcher>
        <div class="stack two">
            <div class="row"><xl-combo w="188" label="数字格式" value="常规"></xl-combo></div>
            <div class="row">
                <xl-tool icon="money" label="会计数字格式" caret></xl-tool><xl-tool icon="percent" w="34" label="百分比样式"></xl-tool><xl-tool icon="comma" w="30" label="千位分隔样式"></xl-tool>
                <span class="sep"></span>
                <xl-tool icon="incdec" label="增加小数位数"></xl-tool><xl-tool icon="decdec" label="减少小数位数"></xl-tool>
            </div>
        </div>
    </xl-group>
    <xl-group w="292" pad="6" label="样式">
        <xl-big-button icon="cond" w="90">条件格式</xl-big-button>
        <xl-big-button icon="tablefmt" w="84" split>套用<span slot="second">表格格式</span></xl-big-button>
        <xl-big-button icon="cellstyle" w="102">单元格样式</xl-big-button>
    </xl-group>
    <xl-group w="210" label="单元格">
        <xl-big-button icon="insert" w="62">插入</xl-big-button>
        <xl-big-button icon="delete" w="62">删除</xl-big-button>
        <xl-big-button icon="format" w="62">格式</xl-big-button>
    </xl-group>
    <xl-group w="270" label="编辑">
        <div class="stack">
            <xl-tool icon="sigma" label="自动求和" caret></xl-tool>
            <xl-tool icon="filldown" w="30" label="填充" caret></xl-tool>
            <xl-tool icon="eraser" w="30" label="清除" caret></xl-tool>
        </div>
        <xl-big-button icon="sort" w="98">排序和筛选</xl-big-button>
        <xl-big-button icon="find" w="98">查找和选择</xl-big-button>
    </xl-group>
    <button class="collapse" aria-label="折叠功能区"><xl-icon name="collapse"></xl-icon></button>`);

define('xl-formula-bar', `
    <style>${RESET}
        :host { display: flex; flex: none; padding: 15px 7px; background: var(--panel); color: #444; }
        .box { height: 37px; display: flex; align-items: center; background: #fdfdfd; border: 1px solid var(--line); }
        .name { width: 152px; }
        .name input { flex: 1; min-width: 0; height: 100%; padding-left: 6px; }
        .name button { width: 28px; color: #777; }
        .dots { width: 45px; display: flex; flex-direction: column; align-items: center; justify-content: center; gap: 4px; }
        .dots i { width: 3px; height: 2px; background: #a8a8a8; }
        .fn { width: 164px; margin-right: 4px; }
        .fn button { flex: 1; }
        .text { flex: 1; }
        .text input { flex: 1; height: 100%; padding: 0 6px; }
        .text button { width: 26px; }
        button { display: flex; align-items: center; justify-content: center; }
    </style>
    <div class="box name"><input aria-label="名称框" value="G13"><button aria-label="名称列表"><xl-icon name="caret"></xl-icon></button></div>
    <div class="dots"><i></i><i></i><i></i></div>
    <div class="box fn">
        <button aria-label="取消"><xl-icon name="cancel"></xl-icon></button>
        <button aria-label="输入"><xl-icon name="enter"></xl-icon></button>
        <button aria-label="插入函数"><xl-icon name="fx"></xl-icon></button>
    </div>
    <div class="box text"><input aria-label="编辑栏"><button aria-label="展开编辑栏"><xl-icon name="expand"></xl-icon></button></div>`);

const DATA = [
    ['序号', '物品', '第一季度', '第二季度', '汇总'],
    ['1', '签字笔', '100支', '80支', '180'],
    ['2', '中性笔', '200支', '150支', '181'],
    ['3', '日志本', '80本', '80本', '182'],
    ['4', '会议记录本', '50本', '50本', '183'],
    ['5', '标签', '300个', '150个', '185'],
    ['6', '夹子', '100个', '100个', ''],
    ['7', '涂改液', '20个', '20个', ''],
    ['8', '红笔', '10支', '15支', ''],
    ['9'], ['10'], ['11']
];
const WIDTHS = { B: 121, E: 139 };
const ROW = 28;
const colWidth = c => WIDTHS[c] || 104;

// only as many rows and columns as the window can show
function visibleColumns() {
    const cols = [];
    let x = 43;
    for (const c of 'ABCDEFGHIJKLMNOPQRSTUVWXYZ') {
        if (x >= window.innerWidth) break;
        cols.push(c);
        x += colWidth(c);
    }
    return { cols, total: x };
}

function sheetTable(height) {
    const { cols, total } = visibleColumns();
    const shown = (height - ROW) / ROW;
    let html = `<table style="width:${total}px"><colgroup><col style="width:43px">`;
    html += cols.map(c => `<col style="width:${colWidth(c)}px">`).join('');
    html += '</colgroup><thead><tr><th class="corner"></th>';
    html += cols.map(c => `<th scope="col" class="${c === 'F' || c === 'G' ? 'sel' : ''}">${c}</th>`).join('');
    html += '</tr></thead><tbody>';
    for (let r = 1; r <= Math.ceil(shown); r++) {
        // a sliver of a last row has no room for its number
        html += `<tr><th scope="row" class="${r === 12 || r === 13 ? 'sel' : ''}">${r - shown < 0.7 ? r : ''}</th>`;
        cols.forEach((c, i) => {
            const cls = [];
            if ((r <= 9 && i <= 4) || (r <= 12 && i === 0)) cls.push('box');
            if (r === 1 || i === 0) cls.push('b');
            if (i === 2) cls.push('yellow');
            else if (r === 7) cls.push('red');
            if (i === 1 && r > 9) cls.push('ry');
            if (r === 6 && i > 4) cls.push('br');
            if ((r === 12 && (c === 'F' || c === 'G')) || (r === 13 && c === 'F')) cls.push('pick');
            const text = (DATA[r - 1] && DATA[r - 1][i]) || '';
            const range = c === 'F' && r === 12 ? '<span class="range"></span>' : '';
            html += `<td class="${cls.join(' ')}">${text}${range}</td>`;
        });
        html += '</tr>';
    }
    return html + '</tbody></table>';
}

define('xl-sheet', `
    <style>${RESET}
        :host { display: block; flex: 1; min-height: 0; overflow: hidden; background: #fff; color: #000; font: 300 22px/25px "Noto Sans CJK SC", sans-serif; }
        table { table-layout: fixed; border-collapse: separate; border-spacing: 0; }
        th, td { height: 28px; padding: 2px 0 0; text-align: center; white-space: nowrap; border-right: 1px solid #d4d4d4; border-bottom: 1px solid #d4d4d4; }
        th { background: var(--panel); font-weight: 300; color: #222; }
        thead th { font-size: 20px; border-right-color: #c0c0c0; border-bottom-color: #9b9b9b; }
        tbody th { border-right-color: #9b9b9b; border-bottom-color: #c0c0c0; }
        .corner { background: linear-gradient(135deg, transparent 50%, #b3b3b3 50%) 20px 5px / 20px 20px no-repeat var(--panel); }
        .sel { background: #d2d2d2; color: var(--green); }
        thead .sel { border-bottom: 2px solid var(--green); line-height: 24px; }
        tbody .sel { border-right: 2px solid var(--green); }
        .b { font-weight: 700; }
        .yellow { background: #ff0; border-color: #ff0; }
        .red { background: red; border-color: red; }
        .ry { border-right-color: #ff0; }
        .br { border-bottom-color: red; }
        .box { border-color: #000; }
        .pick { position: relative; background: #c6c6c6; border-color: #a0a0a0; }
        /* outline over F12:G13, with the fill handle in its corner */
        .range { position: absolute; z-index: 1; left: -2px; top: -2px; width: 211px; height: 59px; border: 2px solid var(--green); box-shadow: inset 0 0 0 1px #fff; }
        .range::after { content: ""; position: absolute; right: -3px; bottom: -3px; width: 7px; height: 7px; background: var(--green); border: solid #fff; border-width: 1px 0 0 1px; }
    </style>
    <div class="view"></div>`, el => {
    const view = el.shadowRoot.querySelector('.view');
    el.draw = () => { view.innerHTML = sheetTable(el.clientHeight); };
    window.addEventListener('resize', el.draw);
});

define('xl-sheet-tabs', `
    <style>${RESET}
        :host { display: flex; flex: none; height: 34px; background: var(--panel); border-top: 1px solid #9b9b9b; border-bottom: 1px solid var(--line); align-items: center; }
        button { width: 34px; height: 30px; display: flex; align-items: center; justify-content: center; }
        .nav { display: flex; width: 115px; padding-left: 15px; }
        a { align-self: flex-start; height: 31px; margin-top: -1px; padding: 0 13px; font-size: 20px; line-height: 26px; color: var(--green); background: #fff; border: solid #9b9b9b; border-width: 0 1px; border-bottom: 2px solid var(--green); }
        .add { margin-left: 31px; }
    </style>
    <div class="nav"><button aria-label="上一张"><xl-icon name="prev"></xl-icon></button><button aria-label="下一张"><xl-icon name="next"></xl-icon></button></div>
    <a href="#">Sheet1</a>
    <button class="add" aria-label="新工作表"><xl-icon name="plus"></xl-icon></button>`);

define('xl-status-bar', `
    <style>${RESET}
        :host { display: flex; flex: none; height: 32px; align-items: center; background: var(--ribbon); padding: 0 12px 0 11px; }
        button { height: 32px; display: flex; align-items: center; justify-content: center; }
        .macro { margin-left: 27px; }
        .views { display: flex; margin-left: auto; }
        .views button { width: 60px; }
        .views .on { background: #c6c6c6; }
        .zoom { display: flex; align-items: center; margin-left: 8px; }
        .zoom button { width: 11px; }
        .zoom .pct { width: auto; margin-left: 20px; }
        input { appearance: none; width: 148px; height: 20px; margin: 0 9px 2px; background: linear-gradient(#b0b0b0, #b0b0b0) 0 10px / 100% 2px no-repeat; }
        input::-webkit-slider-thumb { appearance: none; width: 8px; height: 14px; background: #666; }
    </style>
    <span>就绪</span>
    <button class="macro" aria-label="录制宏"><xl-icon name="macro"></xl-icon></button>
    <div class="views">
        <button class="on" aria-label="普通"><xl-icon name="normal"></xl-icon></button>
        <button aria-label="页面布局"><xl-icon name="layout"></xl-icon></button>
        <button aria-label="分页预览"><xl-icon name="pagebreak"></xl-icon></button>
    </div>
    <div class="zoom">
        <button aria-label="缩小"><xl-icon name="zoomout"></xl-icon></button>
        <input type="range" min="0" max="200" value="100" aria-label="缩放">
        <button aria-label="放大"><xl-icon name="zoomin"></xl-icon></button>
        <button class="pct">100%</button>
    </div>`);

const MOSAIC = [
    ['#363c3d', '#313535', '#505454', '#1c2121', '#2b3031', '#33383a', '#212628', '#2b3031', '#252a2b', '#2a2b2a', '#262726'],
    ['#262b2c', '#242829', '#242727', '#303432', '#434647', '#484b4c', '#404445', '#1d2223', '#1e2324', '#212627', '#262626']
];

define('win-taskbar', `
    <style>${RESET}
        :host { display: flex; flex: none; height: 60px; position: relative; background: #1f2526; color: #fff; }
        button { height: 60px; display: flex; align-items: center; justify-content: center; }
        .sys button { width: 72px; }
        .sys, .apps, .tray { display: flex; }
        .sep { width: 5px; height: 36px; margin: 12px 18px 0 9px; border: solid #4c5152; border-width: 0 1px; }
        .apps { gap: 2px; }
        .apps button { width: 73px; position: relative; padding-right: 2px; }
        .run::after { content: ""; position: absolute; left: 6px; right: 6px; bottom: 0; height: 3px; background: #76b9ed; }
        .on { background: #5a6061; }
        .on::after { left: 0; right: 0; }
        .tray { margin-left: auto; padding-right: 276px; }
        .tray button { width: 36px; }
        .tray .mi { width: 58px; }
        .mosaic { position: absolute; right: 0; bottom: 0; }
    </style>
    <div class="sys">
        <button aria-label="开始"><xl-icon name="start"></xl-icon></button>
        <button aria-label="搜索"><xl-icon name="search"></xl-icon></button>
        <button aria-label="Cortana"><xl-icon name="cortana"></xl-icon></button>
        <button aria-label="任务视图"><xl-icon name="taskview"></xl-icon></button>
    </div>
    <span class="sep"></span>
    <div class="apps">
        <button aria-label="文件资源管理器"><xl-icon name="folder"></xl-icon></button>
        <button class="run" aria-label="Edge"><xl-icon name="edge"></xl-icon></button>
        <button class="run" aria-label="微信"><xl-icon name="wechat"></xl-icon></button>
        <button class="run on" aria-label="Excel"><xl-icon name="excel"></xl-icon></button>
        <button class="run" aria-label="Word"><xl-icon name="word"></xl-icon></button>
    </div>
    <div class="tray">
        <button class="mi" aria-label="小米"><xl-icon name="mi"></xl-icon></button>
        <button aria-label="显示隐藏的图标"><xl-icon name="up"></xl-icon></button>
        <button aria-label="微信"><xl-icon name="traychat"></xl-icon></button>
        <button aria-label="电池"><xl-icon name="battery"></xl-icon></button>
        <button aria-label="音量"><xl-icon name="sound"></xl-icon></button>
        <button aria-label="网络"><xl-icon name="wifi"></xl-icon></button>
    </div>
    <svg class="mosaic" width="272" height="76" viewBox="1648 1004 272 76" aria-hidden="true">
        <path d="M1649 1032c4-10 10-23 26-24h120l75 4c20 2 40-2 50 9v11z" fill="#868787"/>
        ${MOSAIC.map((line, r) => line.map((c, i) => `<rect x="${1656 + i * 24}" y="${1032 + r * 24}" width="24" height="24" fill="${c}"/>`).join('')).join('')}
    </svg>`);

define('level-meter', () => {
    let bars = '';
    for (let i = 0; i < 23; i++) {
        const c = i < 10 ? '#33373f' : `hsl(${60 + (i - 10) * 9} 50% 60%)`;
        bars += `<rect x="6" y="${10 + i * 3}" width="7" height="2" fill="${c}"/>`;
    }
    return `
    <style>:host { position: absolute; right: 0; top: 694px; } svg { display: block; }</style>
    <svg width="15" height="90" aria-hidden="true"><path d="M16 1H6Q1 1 1 6v77q0 5 5 5h10" fill="#5a6070" stroke="#33373f" stroke-width="2"/>${bars}</svg>`;
});

define('site-watermark', `
    <style>
        :host { position: absolute; right: 90px; bottom: 40px; pointer-events: none; }
        svg { display: block; overflow: visible; filter: drop-shadow(0 0 1px #777a); }
        text { paint-order: stroke; }
    </style>
    <svg width="360" height="170" viewBox="1470 870 360 170">
        <g fill="#fff" fill-opacity=".85" stroke="#d4d4d4" stroke-opacity=".8">
            <ellipse cx="1605" cy="918" rx="13" ry="17"/>
            <ellipse cx="1629" cy="893" rx="12" ry="17"/>
            <ellipse cx="1660" cy="895" rx="13" ry="17" transform="rotate(12 1660 895)"/>
            <ellipse cx="1679" cy="925" rx="13" ry="17"/>
            <path d="M1641 920c14 0 16 10 25 19 9 8 19 16 18 30-1 12-10 16-24 15-12-2-24-2-36 0-14 1-24-4-24-17 0-12 8-18 17-26 9-9 10-21 24-21z"/>
            <g font-weight="700" font-family="Liberation Sans, sans-serif" stroke-width="2">
                <text x="1473" y="982" font-size="76">Bai</text>
                <text x="1612" y="974" font-size="50" stroke="#bbb">du</text>
            </g>
            <text x="1696" y="978" font-size="58" font-weight="900" font-family="Noto Sans CJK SC, sans-serif">经验</text>
            <text x="1477" y="1027" font-size="39" font-weight="400" font-family="Noto Sans, sans-serif">jingyan.baidu.com</text>
        </g>
    </svg>`);

document.querySelector('xl-sheet').draw();
</script>
</body>
</html>
